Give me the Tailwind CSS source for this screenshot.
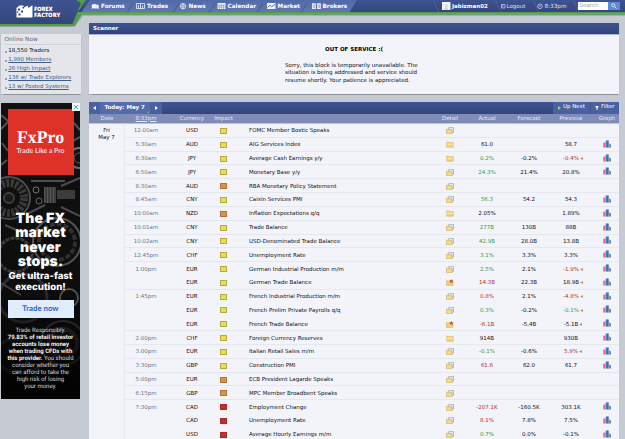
<!DOCTYPE html>
<html lang="en">
  <head>
    <meta charset="UTF-8" />
    <meta name="viewport" content="width=device-width, initial-scale=1.0" />
    <title>Forex Factory Calendar</title>
    <script src="https://cdn.jsdelivr.net/npm/@tailwindcss/browser@4"></script>
    <style>
      body {
        font-family: "DejaVu Sans", Verdana, sans-serif;
        text-rendering: geometricPrecision;
      }
    </style>
  </head>

  <body class="w-[625px] h-[439px] overflow-hidden bg-[#c6cad3] text-[5.5px] leading-[7px] text-[#0c0f16] relative">
    <!-- shared icons -->
    <svg class="hidden">
      <symbol id="folder" viewBox="0 0 8 7">
        <path d="M.7 1h2.200l.6.6h3.800v4.700H.7z" fill="#f0cf70" stroke="#cda348" stroke-width=".4" />
        <path d="M1.200 2.400h5.500v2H1.200z" fill="#f9e4a4" />
      </symbol>
      <symbol id="folders" viewBox="0 0 8 7">
        <path d="M2.700.4h4.800v4.800H2.700z" fill="#e0e5f0" stroke="#8d98b5" stroke-width=".6" />
        <path d="M.4 2.200h2l.5.6h3.300v3.800H.4z" fill="#f5dc86" stroke="#c49b42" stroke-width=".5" />
      </symbol>
      <symbol id="starred" viewBox="0 0 8 7">
        <path d="M.4 1.800h2.300l.5.7h3.800v4.100H.4z" fill="#f1d170" stroke="#c49b42" stroke-width=".4" />
        <path d="M5.300 0l.7 1.200 1.600.2-1.100 1.100.3 1.500-1.500-.7-1.400.7.3-1.500-1.100-1.100 1.500-.2z" fill="#c8562e" />
      </symbol>
      <symbol id="bars" viewBox="0 0 8 8">
        <path d="M.2 2.600h2.400v4.900H.2z" fill="#df7481" />
        <path d="M2.700.5h2.600v7H2.700z" fill="#477fd0" />
        <path d="M4.600.5h.9v7h-.9z" fill="#2c559e" />
        <path d="M5.600 3.400h1.200v4.100H5.600z" fill="#6a94d4" />
        <path d="M6.800 4.300h1v3.200h-1z" fill="#58605c" />
      </symbol>
    </svg>

    <!-- top bar -->
    <header class="relative h-[26px]">
      <svg class="absolute inset-0" width="625" height="27" viewBox="0 0 625 27">
        <defs>
          <linearGradient id="bar" x1="0" y1="0" x2="0" y2="1">
            <stop offset="0" stop-color="#3e5391" />
            <stop offset="1" stop-color="#34467a" />
          </linearGradient>
          <linearGradient id="tab" x1="0" y1="0" x2="0" y2="1">
            <stop offset="0" stop-color="#526aa9" />
            <stop offset="1" stop-color="#6077b2" />
          </linearGradient>
        </defs>
        <path d="M0 0H625V16H83L75 27H0z" fill="#a9aeba" />
        <path d="M0 0H625V14.800H82L74.500 26.300H0z" fill="#539b51" />
        <path d="M76 0H625V12H76z" fill="url(#bar)" />
        <path d="M75 0H86L83 4 78 12z" fill="#4fa246" />
        <path d="M78 13.600H625" stroke="#71ac73" stroke-width=".7" />
        <path d="M90 0H357L349.500 12H81.500z" fill="url(#tab)" />
        <path d="M0 0H76L81 3 72.500 24H0z" fill="url(#bar)" />
        <path d="M133 3l-5.500 9M179 3l-5.500 9M215 3l-5.500 9M263 3l-5.500 9M307 3l-5.500 9" stroke="#42578f" stroke-width="1" />
        <path d="M433 0l6 12M495 0l6 12M533 0l6 12M573 0l6 12" stroke="#53669f" stroke-width=".8" />
        <!-- logo mark -->
        <path d="M16.500 8l3-2.500h4v2.300L28 5.500V8l4.500-2.700V17.600H16.500z" fill="#fff" />
        <path d="M18 8.500h2v2h-2zM21 10.500h2v2h-2zM18.500 13.500h2v2h-2zM22.500 7h1.500v1.500h-1.500zM17 11.500h1.300v1.300H17z" fill="#35477d" />
        <!-- nav icons -->
        <g fill="#eef2fa">
          <path d="M91.500 5.500a2.800 2.200 0 1 1 2 2.800l-2 .8.5-1.600z" />
          <path d="M96.500 4.500a2.300 2 0 0 1 2 3.200l.4 1.300-1.600-.6a3 3 0 0 1-2.500-.4c2-.4 2.500-2 1.700-3.500z" />
        </g>
        <path d="M136.500 3.500h8v5h-8zM138.500 5v3.500M140.500 4v4.500M142.500 5.500v3" fill="none" stroke="#eef2fa" stroke-width=".8" />
        <circle cx="183" cy="6.200" r="2.700" fill="none" stroke="#eef2fa" stroke-width=".8" />
        <path d="M180 6.200h6M183 3.500q-2 2.700 0 5.400M183 3.500q2 2.700 0 5.400" fill="none" stroke="#eef2fa" stroke-width=".6" />
        <path d="M217.500 3h8v6h-8z" fill="#eef2fa" />
        <path d="M217.500 5.200h8M217.500 7.100h8M219.500 4.500V9M221.500 4.500V9M223.500 4.500V9" stroke="#6f84ba" stroke-width=".5" />
        <path d="M267 3h8.500v6H267z" fill="#eef2fa" />
        <path d="M267.500 7.500l2.500-2.200 1.700 1.500 3.500-2.600" fill="none" stroke="#50669f" stroke-width=".9" />
        <path d="M312 3.200h3.800V9H312zM317 3.200h3.800V9H317z" fill="#eef2fa" />
        <path d="M313.300 4.500v3.500M314.600 4.500v3.500M318.300 4.500v3.500M319.500 4.500v3.500" stroke="#6077b2" stroke-width=".5" />
        <!-- user area -->
        <path d="M442 2h8.500v8H442z" fill="#f1f3f8" />
        <path d="M444 10q.3-2 1.500-2.300-1.200-3.200.8-3.500 2 .3.800 3.500 1.200.3 1.500 2.300z" fill="#cfd5e2" />
        <path d="M503 4.500h-1.500v3.500h3.500V4.500zM503.500 6.200h-2" fill="none" stroke="#dbe1f0" stroke-width=".7" />
        <circle cx="540" cy="6.300" r="2.300" fill="none" stroke="#dbe1f0" stroke-width=".7" />
        <path d="M540 4.800v1.700h-1.200" fill="none" stroke="#dbe1f0" stroke-width=".6" />
      </svg>
      <div class="absolute left-[34px] top-[6px] font-[Open_Sans,sans-serif] font-extrabold text-[5.800px] leading-[6px] tracking-[-.1px] text-white">FOREX<br />FACTORY</div>
      <nav class="absolute left-0 top-[4px] font-bold text-[5.700px] leading-[6px] text-white">
        <span class="absolute left-[101px]">Forums</span>
        <span class="absolute left-[147px]">Trades</span>
        <span class="absolute left-[188.500px]">News</span>
        <span class="absolute left-[227.500px]">Calendar</span>
        <span class="absolute left-[277.500px]">Market</span>
        <span class="absolute left-[322.500px]">Brokers</span>
        <span class="absolute left-[452px] text-[5.500px]">Jabizman02</span>
        <span class="absolute left-[506.500px] text-[5.500px] font-normal text-[#dfe5f3]">Logout</span>
        <span class="absolute left-[544.500px] font-normal text-[#dfe5f3]">8:33pm</span>
      </nav>
      <div class="absolute left-[578px] top-[2px] flex h-[8px]">
        <div class="w-[29.500px] bg-white pl-[1.500px] text-[5.500px] leading-[9px] text-[#9a9da6]">Search</div>
        <div class="w-[12px] bg-[#5b8bd8]">
          <svg class="mx-auto" width="8" height="8" viewBox="0 0 8 8" fill="none" stroke="#e6effc">
            <circle cx="3.300" cy="3.300" r="1.600" stroke-width=".8" />
            <path d="M4.500 4.500l2 2" stroke-width="1" />
          </svg>
        </div>
      </div>
    </header>

    <div class="flex">
      <!-- left sidebar -->
      <aside class="w-[89px] shrink-0 pl-px pt-[8px]">
        <section class="h-[60px] w-[80px] bg-[#e4e6eb] pl-[3.500px] shadow-[0_.5px_1px_#8d929c]">
          <h3 class="h-[11px] pt-[3px] text-[5.800px] text-[#666a72] border-b border-[#d0d3da]">Online Now</h3>
          <ul class="pt-[2px] text-[5.500px] leading-[9px] text-[#3d5d8c]">
            <li class="flex items-center gap-[1.800px] text-[#0c0f16]"><i class="size-[2px] rounded-full bg-[#828995]"></i>18,550 Traders</li>
            <li class="flex items-center gap-[1.800px]"><i class="size-[2px] rounded-full bg-[#828995]"></i><a class="underline">1,980 Members</a></li>
            <li class="flex items-center gap-[1.800px]"><i class="size-[2px] rounded-full bg-[#828995]"></i><a class="underline">26 High Impact</a></li>
            <li class="flex items-center gap-[1.800px]"><i class="size-[2px] rounded-full bg-[#828995]"></i><a class="underline">136 w/ Trade Explorers</a></li>
            <li class="flex items-center gap-[1.800px]"><i class="size-[2px] rounded-full bg-[#828995]"></i><a class="underline">13 w/ Posted Systems</a></li>
          </ul>
        </section>

        <section class="relative mt-[9px] h-[296px] w-[79px] overflow-hidden bg-[#141414] text-center text-white">
          <!-- machinery backdrop -->
          <svg class="absolute inset-0" width="79" height="296" viewBox="0 0 79 296" fill="none">
            <defs>
              <linearGradient id="shade" x1="0" y1="0" x2="0" y2="1">
                <stop offset="0" stop-color="#000" stop-opacity=".15" />
                <stop offset=".6" stop-color="#000" stop-opacity=".35" />
                <stop offset="1" stop-color="#000" stop-opacity=".9" />
              </linearGradient>
            </defs>
            <g stroke="#555">
              <circle cx="8" cy="95" r="21" stroke="#666" stroke-width="2" />
              <circle cx="8" cy="95" r="15" stroke="#4c4c4c" stroke-width="8" stroke-dasharray="3 1.500" />
              <circle cx="8" cy="95" r="5" fill="#222" stroke-width="2" />
              <circle cx="35" cy="87" r="3" stroke="#999" />
              <circle cx="38" cy="98" r="3" stroke="#888" />
              <circle cx="78" cy="55" r="10" stroke="#888" stroke-width="2" />
              <circle cx="78" cy="55" r="5" stroke="#777" />
              <circle cx="56" cy="139" r="24" stroke="#777" stroke-width="2" />
              <circle cx="56" cy="139" r="18" stroke="#444" stroke-width="4" stroke-dasharray="5 2" />
              <circle cx="14" cy="152" r="17" stroke="#555" stroke-width="3" stroke-dasharray="4 1" />
              <circle cx="68" cy="195" r="9" stroke="#888" stroke-width="2" />
              <circle cx="22" cy="195" r="24" stroke="#444" stroke-width="3" />
              <circle cx="62" cy="240" r="22" stroke="#555" stroke-width="2" />
              <circle cx="62" cy="240" r="14" stroke="#3c3c3c" stroke-width="4" />
              <circle cx="12" cy="252" r="16" stroke="#3c3c3c" stroke-width="3" />
              <path d="M0 12l7 6M0 26l7-7M1 40l6 8M0 62l6-5M73 20l6 7M72 38l7-4M30 78h34M28 110l16-8M60 83l19-8M60 104l19 9M4 122l20 9M0 180l20 12M30 268l22-10" stroke="#666" stroke-width="2" />
            </g>
            <path d="M43 84h12v16H43z" fill="#737373" />
            <path d="M45 84v16M48 84v16M51 84v16M54 84v16" stroke="#303030" />
            <path d="M56 87h18v9H56z" fill="#505050" />
            <path d="M0 0h79v296H0z" fill="url(#shade)" />
          </svg>
          <svg class="absolute right-0 top-0 z-10" width="8" height="8" viewBox="0 0 8 8">
            <path d="M0 0h8v8H0z" fill="#f3f7f8" />
            <path d="M2 2l4 4M6 2L2 6" stroke="#29a5bd" stroke-width=".9" />
          </svg>
          <div class="relative flex flex-col items-center pt-[6px]">
            <div class="h-[66px] w-[66px] bg-[#de3127] pt-[18px]">
              <div class="font-[Liberation_Serif,serif] font-bold text-[17.800px] leading-[20px]">FxPro</div>
              <div class="font-[Lato,sans-serif] text-[6.900px] leading-[8px]">Trade Like a Pro</div>
            </div>
            <div class="mt-[36.500px] font-[Inter,sans-serif] font-black text-[14px] leading-[14.600px] tracking-[.1px]">The FX<br />market<br />never<br />stops.</div>
            <div class="mt-px font-[Inter,sans-serif] font-extrabold text-[9.600px] leading-[11.500px] whitespace-nowrap">Get ultra-fast<br />execution!</div>
            <div class="mt-[6.500px] h-[18px] w-[66px] bg-[#e1edfc] font-[Lato,sans-serif] font-bold text-[7.800px] leading-[17px] text-[#2b5fd6]">Trade now</div>
            <p class="mt-[10px] font-[Roboto,sans-serif] text-[6px] leading-[6.900px] text-[#d5d5d5] whitespace-nowrap">
              Trade Responsibly.<br /><b class="text-[#f3f3f3]">79.83% of retail investor<br />accounts lose money<br />when trading CFDs with<br />this provider.</b> You should<br />consider whether you<br />can afford to take the<br />high risk of losing<br />your money.
            </p>
          </div>
        </section>
      </aside>

      <main class="w-[530px] shrink-0 -mt-[3px]">
        <section class="h-[71px] bg-[#f3f4f9] shadow-[0_.5px_1px_#8d929c]">
          <h2 class="h-[11.500px] bg-linear-to-b from-[#3e5391] to-[#33457b] border-b border-[#a9b4d2] pl-[4px] pt-[3px] font-bold text-[5.500px] text-white">Scanner</h2>
          <div class="pt-[12px] text-center font-bold text-[5.500px] text-black">OUT OF SERVICE :(</div>
          <p class="mx-auto mt-[9.500px] w-[138px] text-[5.550px] leading-[7.300px] whitespace-nowrap">Sorry, this block is temporarily unavailable. The<br />situation is being addressed and service should<br />resume shortly. Your patience is appreciated.</p>
        </section>

        <section class="mt-[8px] bg-[#f3f4f9]">
          <div class="flex h-[11.500px] bg-linear-to-b from-[#3e5391] to-[#33457b] text-white leading-[13px]">
            <div class="w-[11px] bg-[#4a60a0] grid place-items-center"><svg width="3" height="4"><path d="M3 0v4L0 2z" fill="#fff" /></svg></div>
            <div class="relative w-[50px] bg-[#566bab] pl-[4.500px] font-bold text-[5.500px]">Today: May 7<i class="absolute right-[1px] bottom-[1px] border-[1.500px] border-transparent border-r-[#6abf5b] border-b-[#6abf5b]"></i></div>
            <div class="w-[12px] bg-[#4a60a0] grid place-items-center"><svg width="3" height="4"><path d="M0 0v4l3-2z" fill="#fff" /></svg></div>
            <div class="ml-auto flex w-[37px] items-center justify-center gap-[2px] bg-[#4a60a0]"><svg width="3" height="4"><path d="M0 0v4l3-2z" fill="#8fd487" /></svg>Up Next</div>
            <div class="flex w-[29px] items-center justify-center gap-[1.500px] bg-[#4a60a0] border-l border-[#41558f]"><svg width="4" height="4"><path d="M0 0h4L2.500 2v2h-1V2z" fill="#fff" /></svg>Filter</div>
          </div>
          <div class="grid h-[10.500px] grid-cols-[36px_42px_50px_13px_207px_26px_48px_36px_48px_24px] justify-items-center bg-[#7f8cb7] border-b border-[#bdc5df] text-[5.400px] leading-[10.500px] text-[#e6e9f4] whitespace-nowrap">
            <span>Date</span><span class="underline">8:33pm</span><span>Currency</span><span class="flex justify-center w-0">Impact</span><span></span>
            <span>Detail</span><span>Actual</span><span>Forecast</span><span>Previous</span><span>Graph</span>
          </div>
          <div class="flex">
            <div class="w-[36px] shrink-0 border-r border-[#e8eaf1] pt-[4px] text-center leading-[7.300px]">Fri<br />May 7</div>
            <div id="events" class="w-[494px]"></div>
          </div>
        </section>
      </main>
    </div>

    <script>
      // time, currency, impact, event, detail icon, actual, colour, forecast, previous, colour, revised
      const events = [
        ["12:00am", "USD", "y", "FOMC Member Bostic Speaks", "folders"],
        ["5:30am", "AUD", "y", "AIG Services Index", "folder", "61.0", "k", "", "58.7", "k"],
        ["6:30am", "JPY", "y", "Average Cash Earnings y/y", "folder", "0.2%", "g", "-0.2%", "-0.4%", "r", 1],
        ["6:50am", "JPY", "y", "Monetary Base y/y", "folders", "24.3%", "g", "21.4%", "20.8%", "k"],
        ["8:30am", "AUD", "o", "RBA Monetary Policy Statement", "folders"],
        ["8:45am", "CNY", "y", "Caixin Services PMI", "folders", "56.3", "g", "54.2", "54.3", "k"],
        ["10:00am", "NZD", "o", "Inflation Expectations q/q", "folder", "2.05%", "k", "", "1.89%", "k"],
        ["10:01am", "CNY", "y", "Trade Balance", "folders", "277B", "g", "130B", "88B", "k"],
        ["10:02am", "CNY", "y", "USD-Denominated Trade Balance", "folders", "42.9B", "g", "28.0B", "13.8B", "k"],
        ["12:45pm", "CHF", "y", "Unemployment Rate", "folders", "3.1%", "g", "3.3%", "3.3%", "k"],
        ["1:00pm", "EUR", "y", "German Industrial Production m/m", "folders", "2.5%", "g", "2.1%", "-1.9%", "r", 1],
        ["", "EUR", "y", "German Trade Balance", "starred", "14.3B", "r", "22.3B", "18.9B", "k", 1],
        ["1:45pm", "EUR", "y", "French Industrial Production m/m", "folders", "0.8%", "r", "2.1%", "-4.8%", "r", 1],
        ["", "EUR", "y", "French Prelim Private Payrolls q/q", "folders", "0.3%", "g", "-0.2%", "-0.1%", "g", 1],
        ["", "EUR", "y", "French Trade Balance", "starred", "-6.1B", "r", "-5.4B", "-5.1B", "k", 1],
        ["2:00pm", "CHF", "y", "Foreign Currency Reserves", "folder", "914B", "k", "", "930B", "k"],
        ["3:00pm", "EUR", "y", "Italian Retail Sales m/m", "folders", "-0.1%", "g", "-0.6%", "5.9%", "r", 1],
        ["3:30pm", "GBP", "y", "Construction PMI", "folders", "61.6", "r", "62.0", "61.7", "k"],
        ["5:00pm", "EUR", "o", "ECB President Lagarde Speaks", "folders"],
        ["6:15pm", "GBP", "o", "MPC Member Broadbent Speaks", "folders"],
        ["7:30pm", "CAD", "r", "Employment Change", "folders", "-207.1K", "r", "-160.5K", "303.1K", "k"],
        ["", "CAD", "r", "Unemployment Rate", "folders", "8.1%", "r", "7.8%", "7.5%", "k"],
        ["", "USD", "r", "Average Hourly Earnings m/m", "folders", "0.7%", "g", "0.0%", "-0.1%", "k"],
      ];

      const text = { k: "text-[#0c0f16]", g: "text-[#3c963f]", r: "text-[#b52f34]" };
      const impact = {
        y: "bg-[#eadd4e] border-[#b5a84a]",
        o: "bg-[#e08f48] border-[#b47440]",
        r: "bg-[#d32a28] border-[#a52a2a]",
      };

      document.getElementById("events").innerHTML = events.map((e, i) => `
        <div class="grid h-[13.820px] grid-cols-[42px_50px_13px_207px_26px_48px_36px_48px_24px] items-center justify-items-center whitespace-nowrap [&>span]:pt-[2px] ${
          e[0] && i ? "shadow-[0_-.7px_0_#dfe2ea]" : ""
        }">
          <span class="text-[#6f747f]">${e[0]}</span>
          <span>${e[1]}</span>
          <i class="h-[6px] w-[7px] border ${impact[e[2]]}"></i>
          <span class="justify-self-start pl-[19px]">${e[3]}</span>
          <svg width="8" height="7"><use href="#${e[4]}" /></svg>
          <span class="${text[e[6]] || ""}">${e[5] || ""}</span>
          <span>${e[7] || ""}</span>
          <span class="relative ${text[e[9]] || ""}">${e[8] || ""}${
            e[10] ? '<svg class="absolute -right-[4px] top-[3px]" width="3" height="3"><path d="M3 0v3L0 1.500z" fill="#c8905c" /></svg>' : ""
          }</span>
          ${e[5] ? '<svg class="-mt-[2px]" width="8" height="8"><use href="#bars" /></svg>' : "<i></i>"}
        </div>`).join("");
    </script>
  </body>
</html>
